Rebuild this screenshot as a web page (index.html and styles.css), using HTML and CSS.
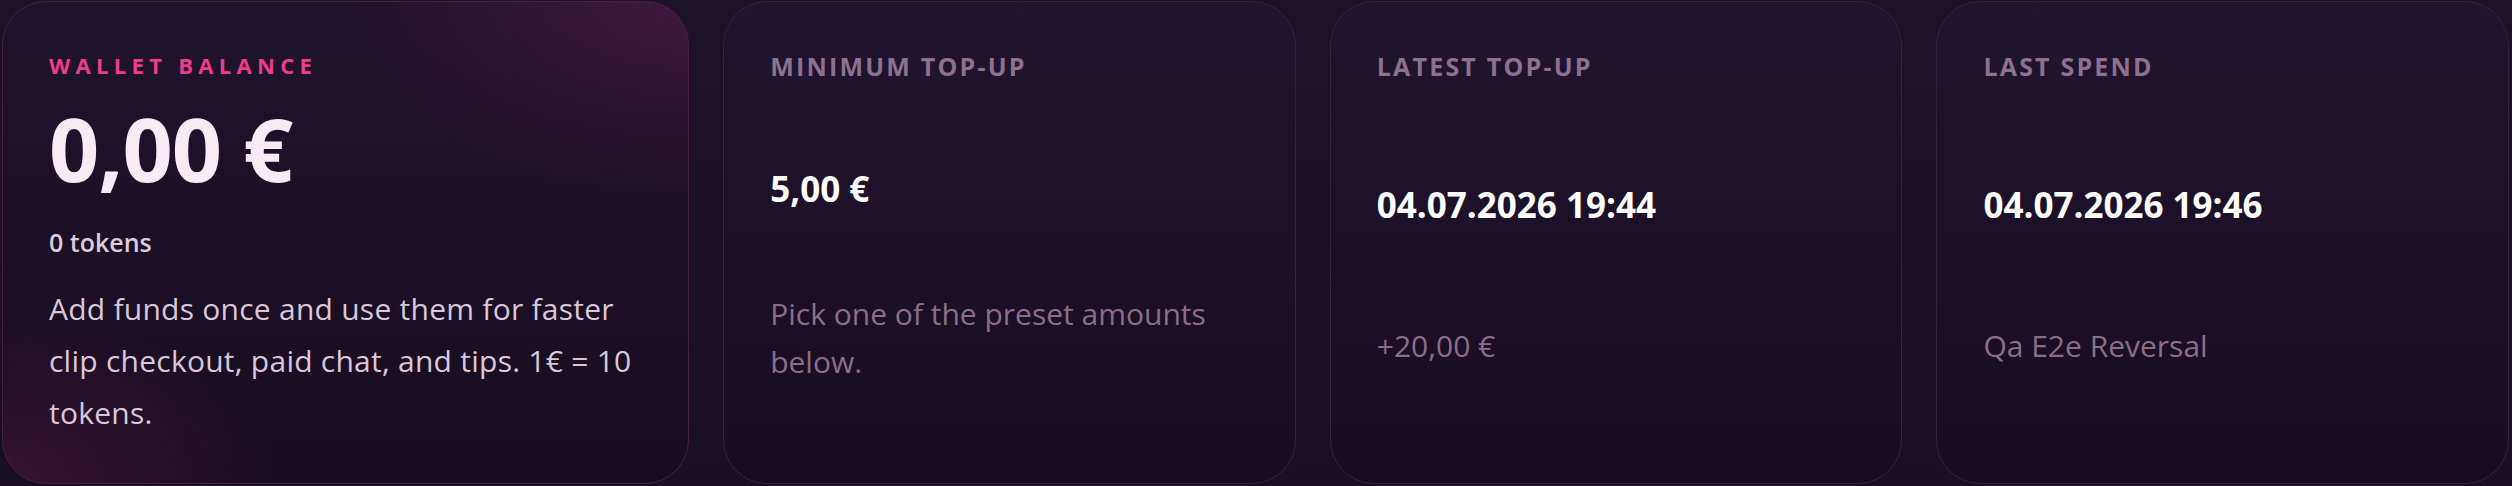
FILE: index.html
```html
<!DOCTYPE html>
<html lang="en">
<head>
<meta charset="utf-8">
<title>Wallet</title>
<link rel="stylesheet" href="styles.css">
</head>
<body>
<section class="stats">
  <article class="card card-wallet">
    <div class="wallet-label">Wallet balance</div>
    <div class="wallet-amount">0,00 €</div>
    <div class="wallet-tokens">0 tokens</div>
    <p class="wallet-desc">Add funds once and use them for faster clip checkout, paid chat, and tips. 1€ = 10 tokens.</p>
  </article>
  <article class="card card-stat">
    <div class="stat-label">Minimum top-up</div>
    <div class="stat-body">
      <div class="stat-value">5,00 €</div>
      <div class="stat-sub">Pick one of the preset amounts below.</div>
    </div>
  </article>
  <article class="card card-stat">
    <div class="stat-label">Latest top-up</div>
    <div class="stat-body">
      <div class="stat-value">04.07.2026 19:44</div>
      <div class="stat-sub">+20,00 €</div>
    </div>
  </article>
  <article class="card card-stat">
    <div class="stat-label">Last spend</div>
    <div class="stat-body">
      <div class="stat-value">04.07.2026 19:46</div>
      <div class="stat-sub">Qa E2e Reversal</div>
    </div>
  </article>
</section>
</body>
</html>
```

FILE: styles.css
```css
html, body {
  margin: 0;
  padding: 0;
}

body {
  width: 2512px;
  height: 486px;
  overflow: hidden;
  background: linear-gradient(180deg, #1d1329 0%, #190f24 100%);
  font-family: "Open Sans", "Noto Sans", "DejaVu Sans", sans-serif;
}

.stats {
  display: grid;
  grid-template-columns: 1.2fr 1fr 1fr 1fr;
  column-gap: 34px;
  padding: 1px 3px 0 2px;
  box-sizing: border-box;
  width: 2512px;
}

.card {
  border-radius: 44px;
  border: 1px solid #37223f;
  box-sizing: border-box;
  min-width: 0;
}

.card-wallet {
  padding: 47px 46px 44px;
  border-color: #472044;
  background:
    radial-gradient(ellipse 50% 40% at 100% 0%, rgba(110, 28, 85, 0.4), rgba(110, 28, 85, 0) 100%),
    radial-gradient(ellipse 40% 35% at 0% 100%, rgba(105, 28, 85, 0.4), rgba(105, 28, 85, 0) 100%),
    linear-gradient(180deg, #20132d 0%, #170c1f 100%);
}

.wallet-label {
  font-size: 22px;
  line-height: 32px;
  font-weight: 700;
  letter-spacing: 5.3px;
  text-transform: uppercase;
  color: #ec3d8c;
}

.wallet-amount {
  margin-top: 19px;
  font-size: 88px;
  line-height: 96px;
  font-weight: 700;
  color: #f7ecf3;
  letter-spacing: -1px;
}

.wallet-tokens {
  margin-top: 28px;
  font-size: 25px;
  line-height: 36px;
  font-weight: 600;
  color: #dccbdb;
}

.wallet-desc {
  margin: 23px 0 0;
  font-size: 30px;
  line-height: 52px;
  font-weight: 400;
  letter-spacing: 0.25px;
  color: #d9c7d9;
}

.card-stat {
  display: flex;
  flex-direction: column;
  padding: 47px 46px 18px;
  background: linear-gradient(180deg, #21152f 0%, #160c1f 100%);
}

.stat-label {
  font-size: 25px;
  line-height: 35px;
  font-weight: 700;
  letter-spacing: 2.2px;
  text-transform: uppercase;
  color: #8d7190;
  margin-bottom: 3px;
}

.stat-body {
  flex: 1;
  display: flex;
  flex-direction: column;
  justify-content: space-evenly;
}

.stat-value {
  font-size: 35px;
  line-height: 46px;
  font-weight: 700;
  color: #ffffff;
}

.stat-sub {
  font-size: 30px;
  line-height: 48px;
  font-weight: 400;
  color: #8a6e89;
}
```
